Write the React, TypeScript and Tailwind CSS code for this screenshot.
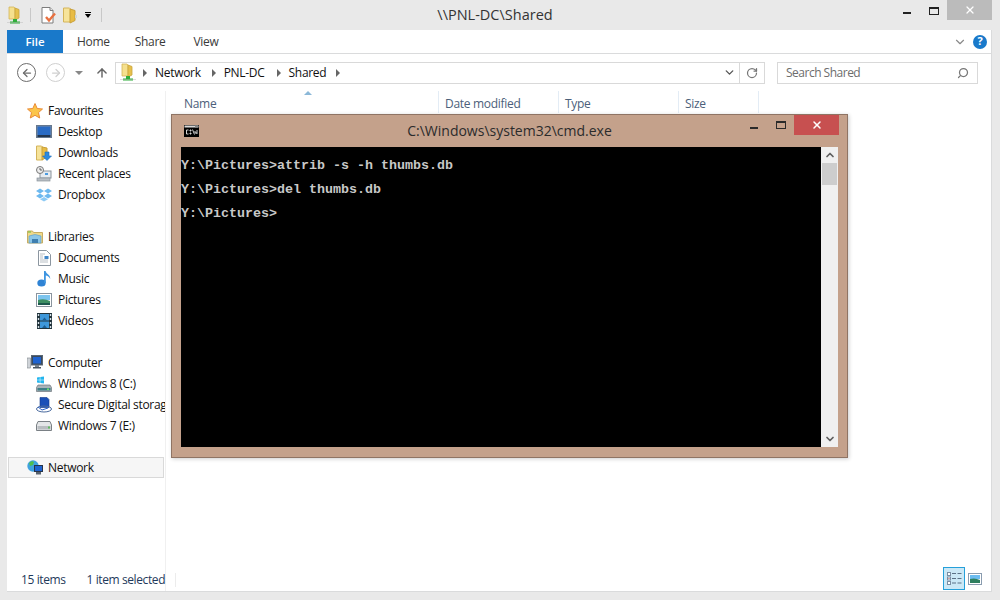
import React from 'react';
import { ChevronDown, RotateCw, Search, ArrowUp, ArrowLeft, ArrowRight, X, ChevronUp } from 'lucide-react';

const SEGOE = "font-['Open_Sans',sans-serif]";

// --- ICONS ---
const NetworkFolder = () => (
  <svg width="16" height="19" viewBox="0 0 16 19">
    <path d="M2 1h5l1 1v11H2z" fill="#f5e08e" stroke="#d3b558" strokeWidth="0.8" />
    <path d="M8 2l4 1.500V12l-4 2z" fill="#e6c04d" stroke="#c9a53c" strokeWidth="0.8" />
    <rect x="6" y="13" width="4" height="3" fill="#2fae3a" />
    <rect x="3" y="15.500" width="10" height="2" fill="#2fae3a" />
    <rect x="0" y="16" width="16" height="1" fill="#bdbdbd" opacity="0.5" />
  </svg>
);

const DocCheck = () => (
  <svg width="16" height="17" viewBox="0 0 16 17">
    <path d="M1 .5h8l3 3v12.500H1z" fill="#fff" stroke="#7d7d7d" />
    <path d="M9 .5v3h3" fill="#e8e8e8" stroke="#7d7d7d" />
    <path d="M5 10l3 3.500 6-7" fill="none" stroke="#e8703f" strokeWidth="2.4" />
  </svg>
);

const PlainFolder = () => (
  <svg width="14" height="17" viewBox="0 0 14 17">
    <path d="M.5 1h6l1 1v13h-7z" fill="#f6e39a" stroke="#d4b45a" />
    <path d="M7 2l5 1.500v10L7 16z" fill="#e8bc45" stroke="#c9a03a" />
    <rect x="12" y="8" width="2" height="3" fill="#cfd8dc" />
  </svg>
);

const Star = () => (
  <svg width="16" height="16" viewBox="0 0 16 16">
    <path d="M8 .5l2.200 5 5.300.5-4 3.600 1.200 5.400L8 12.300 3.300 15l1.200-5.400-4-3.600 5.300-.5z" fill="#fbc54a" stroke="#ea8a35" />
  </svg>
);

const Desktop = () => (
  <svg width="16" height="14" viewBox="0 0 16 14">
    <rect x=".5" y=".5" width="15" height="12" fill="#7d8ea3" stroke="#66788e" />
    <rect x="1.500" y="1.500" width="13" height="8.500" fill="#2a6bc4" />
    <rect x="1.500" y="10" width="13" height="2" fill="#23364f" />
  </svg>
);

const Downloads = () => (
  <svg width="16" height="16" viewBox="0 0 16 16">
    <path d="M.5 1h5l1 1v13h-6z" fill="#f6e39a" stroke="#d4b45a" />
    <path d="M6 2l5 1v9l-5 3z" fill="#e8bc45" stroke="#c9a03a" />
    <path d="M9 7h4v4h2.500L11 15.500 6.500 11H9z" fill="#2b8ae0" stroke="#1d6db8" strokeWidth="0.6" />
  </svg>
);

const Recent = () => (
  <svg width="16" height="16" viewBox="0 0 16 16">
    <rect x="4" y="5" width="11" height="7" fill="#e6ebf0" stroke="#8b949c" />
    <circle cx="4" cy="4" r="3.500" fill="#eee" stroke="#777" />
    <path d="M4 2v2h2" fill="none" stroke="#444" strokeWidth="0.8" />
    <rect x="9" y="7" width="3" height="2" fill="#4a9be0" />
    <rect x="1" y="12" width="13" height="3" fill="#b9bec4" stroke="#8b949c" strokeWidth="0.7" />
  </svg>
);

const Dropbox = () => (
  <svg width="16" height="14" viewBox="0 0 16 14">
    <path d="M4 .5L8 3 4 5.500 0 3zM12 .5L16 3l-4 2.500L8 3zM4 5.500L8 8l-4 2.500L0 8zM12 5.500L16 8l-4 2.500L8 8z" fill="#6db9ef" />
    <path d="M4 11.200l4-2.300 4 2.300L8 13.500z" fill="#8ecbf5" />
  </svg>
);

const Libraries = () => (
  <svg width="16" height="16" viewBox="0 0 16 16">
    <path d="M.5 2h5l1 1.500h9V14H.5z" fill="#efd98a" stroke="#c9ad62" />
    <rect x="1" y="2.500" width="3" height="1" fill="#6bbf3a" />
    <path d="M2 7q6-3 12 0v7H2z" fill="#8cc6e8" stroke="#5a9ac4" strokeWidth="0.6" />
    <rect x="5" y="10" width="6" height="4" fill="#3f7fb0" />
  </svg>
);

const Documents = () => (
  <svg width="13" height="16" viewBox="0 0 13 16">
    <path d="M.5.5h8l4 4v11H.5z" fill="#fff" stroke="#8c96a0" />
    <path d="M2 4h5M2 6h3M2 8h3M2 10h8M2 12h8" stroke="#a6aeb6" strokeWidth="0.8" />
    <rect x="6.500" y="6" width="4" height="3" fill="#3f86c8" />
  </svg>
);

const Music = () => (
  <svg width="14" height="17" viewBox="0 0 14 17">
    <ellipse cx="4.500" cy="13" rx="4.200" ry="3.600" fill="#2f83d4" />
    <path d="M7 1h1.600c.4 3 5 3.500 4.600 8-1-2.500-2.800-3.500-4.400-3.600V13H7z" fill="#3d94e0" />
  </svg>
);

const Pictures = () => (
  <svg width="16" height="14" viewBox="0 0 16 14">
    <rect x=".5" y=".5" width="15" height="13" fill="#fff" stroke="#8a949e" />
    <rect x="2" y="2" width="12" height="5" fill="#7cc4ee" />
    <path d="M2 7q6-2 12 1v4H2z" fill="#3f8f63" />
    <rect x="2" y="10" width="12" height="2" fill="#1f5a4e" />
  </svg>
);

const Videos = () => (
  <svg width="15" height="16" viewBox="0 0 15 16">
    <rect width="15" height="16" fill="#22343c" />
    <rect x="3" y="1" width="9" height="6.500" fill="#3f98da" />
    <rect x="3" y="8.500" width="9" height="6.500" fill="#3f98da" />
    <path d="M.8 1h1.400v2H.8zM.8 5h1.400v2H.8zM.8 9h1.400v2H.8zM.8 13h1.400v2H.8zM12.800 1h1.400v2h-1.400zM12.800 5h1.400v2h-1.400zM12.800 9h1.400v2h-1.400zM12.800 13h1.400v2h-1.400z" fill="#d7e2e8" />
    <path d="M5 7.500l2.500-3 2.500 3zM5 15l2.500-3 2.500 3z" fill="#1c5f94" />
  </svg>
);

const Computer = () => (
  <svg width="16" height="15" viewBox="0 0 16 15">
    <rect x="0" y="3" width="3.500" height="10" fill="#cfd3d8" stroke="#7c8288" strokeWidth="0.6" />
    <rect x="4.500" y=".5" width="11" height="9.500" fill="#3a4a5c" stroke="#5a6775" />
    <rect x="6" y="2" width="8" height="6.500" fill="#1f63d0" />
    <rect x="8" y="10" width="4" height="2" fill="#76818c" />
    <rect x="6" y="12" width="8" height="1.500" fill="#4a5662" />
  </svg>
);

const WinDrive = () => (
  <svg width="16" height="16" viewBox="0 0 16 16">
    <path d="M1 1.500l2.800-.4v2.700H1zM4.300 1l3.700-.5v3.300H4.300zM1 4.300h2.800V7L1 6.600zM4.300 4.300H8v3.200L4.300 7z" fill="#22b5ee" />
    <path d="M2 9h12l1.500 2.500v4H.5v-4z" fill="#a9b2b8" stroke="#6f777d" strokeWidth="0.7" />
    <rect x="1.500" y="12" width="13" height="2.500" fill="#3f7f86" />
    <rect x="11" y="12.500" width="2" height="1.500" fill="#6ee06a" />
  </svg>
);

const SdDrive = () => (
  <svg width="16" height="16" viewBox="0 0 16 16">
    <path d="M4 .5h7l2 2v8H4z" fill="#1a50b8" stroke="#123a8a" strokeWidth="0.6" />
    <ellipse cx="8" cy="12" rx="7.500" ry="3" fill="none" stroke="#4a6a9e" />
    <path d="M2 10l4 3 6-2" fill="none" stroke="#2a62c8" />
  </svg>
);

const PlainDrive = () => (
  <svg width="16" height="10" viewBox="0 0 16 10">
    <path d="M2 .5h12L15.500 4v5.500H.5V4z" fill="#e4e6e8" stroke="#7a8085" />
    <rect x="1.500" y="5" width="13" height="3.500" fill="#b9bdc1" />
    <rect x="12" y="5.500" width="2" height="2" fill="#5fbd5f" />
  </svg>
);

const NetworkGlobe = () => (
  <svg width="16" height="15" viewBox="0 0 16 15">
    <circle cx="6" cy="6" r="5.700" fill="#3fa2e0" />
    <path d="M2 3l3-2 2 1-1 3-3 1zM7 8l3-1 .5 2-2 2z" fill="#4fbf4f" />
    <rect x="7" y="5" width="9" height="7" fill="#26344a" />
    <rect x="8" y="6" width="7" height="5" fill="#1f63d0" />
    <rect x="9" y="12" width="5" height="2.500" fill="#59636e" />
  </svg>
);

const CmdIcon = () => (
  <svg width="15" height="12" viewBox="0 0 15 12">
    <rect width="15" height="12" fill="#000" />
    <rect x="0.5" y="0.5" width="14" height="2" fill="#d8d8d8" />
    <rect x="11" y="0.5" width="3" height="2" fill="#888" />
    <path d="M4.500 5h-2v4h2M6 5h1v1H6zM6 8h1v1H6zM8.500 4.500l2 5M11 6v2h2M13 5v4" fill="none" stroke="#e8e8e8" strokeWidth="0.9" />
  </svg>
);

const DetailsView = () => (
  <svg width="15" height="13" viewBox="0 0 15 13">
    <rect x=".5" y=".5" width="3" height="3" fill="#fff" stroke="#7b8ea3" />
    <rect x=".5" y="5" width="3" height="3" fill="#fff" stroke="#7b8ea3" />
    <rect x="1.500" y="6" width="1" height="1" fill="#b04040" />
    <rect x=".5" y="9.500" width="3" height="3" fill="#fff" stroke="#7b8ea3" />
    <path d="M5 1.500h4M10.500 1.500h4M5 6.500h4M10.500 6.500h4M5 11h4M10.500 11h4" stroke="#5a7186" />
  </svg>
);

const ThumbView = () => (
  <svg width="14" height="12" viewBox="0 0 14 12">
    <rect x=".5" y=".5" width="13" height="11" fill="#fff" stroke="#8a9caf" />
    <rect x="2" y="2" width="10" height="4" fill="#6cbcf0" />
    <path d="M2 6q5-1.500 10 1v3H2z" fill="#2f7f5f" />
  </svg>
);

// --- DATA ---
const navGroups = [
  {
    head: { label: 'Favourites', icon: <Star /> },
    items: [
      { label: 'Desktop', icon: <Desktop /> },
      { label: 'Downloads', icon: <Downloads /> },
      { label: 'Recent places', icon: <Recent /> },
      { label: 'Dropbox', icon: <Dropbox /> },
    ],
  },
  {
    head: { label: 'Libraries', icon: <Libraries /> },
    items: [
      { label: 'Documents', icon: <Documents /> },
      { label: 'Music', icon: <Music /> },
      { label: 'Pictures', icon: <Pictures /> },
      { label: 'Videos', icon: <Videos /> },
    ],
  },
  {
    head: { label: 'Computer', icon: <Computer /> },
    items: [
      { label: 'Windows 8 (C:)', icon: <WinDrive /> },
      { label: 'Secure Digital storage', icon: <SdDrive /> },
      { label: 'Windows 7 (E:)', icon: <PlainDrive /> },
    ],
  },
];

const columns = [
  { label: 'Name', width: 'w-[261px]' },
  { label: 'Date modified', width: 'w-[120px]' },
  { label: 'Type', width: 'w-[120px]' },
  { label: 'Size', width: 'w-[80px]' },
];

const CrumbArrow = () => <span className="block w-0 h-0 border-y-[4px] border-y-transparent border-l-[4px] border-l-[#666]" />;

const Sep = () => <span className="block w-px h-[14px] bg-[#c8c8c8]" />;

export default function App() {
  return (
    <div className={`${SEGOE} relative w-[1000px] h-[600px] overflow-hidden bg-[#e9e9e9] text-[12px] tracking-[-0.3px] text-[#111] flex flex-col`}>
      {/* Title bar */}
      <div className="h-[30px] relative flex items-center pl-[7px]">
        <NetworkFolder />
        <span className="ml-[7px]"><Sep /></span>
        <span className="ml-[10px]"><DocCheck /></span>
        <span className="ml-[6px]"><PlainFolder /></span>
        <span className="ml-[8px] flex flex-col items-center gap-[1px]">
          <span className="w-[6px] h-px bg-black" />
          <span className="w-0 h-0 border-x-[3.5px] border-x-transparent border-t-[4px] border-t-black" />
        </span>
        <span className="ml-[10px]"><Sep /></span>
        <div className="absolute left-[395px] w-[200px] top-[5px] text-center text-[14.5px] leading-[20px] tracking-normal text-[#333]">\\PNL-DC\Shared</div>
        <div className="ml-auto flex items-start self-start mr-[8px]">
          <span className="w-[8px] h-[2px] bg-[#222] mt-[12px] mr-[18px]" />
          <span className="w-[10px] h-[8px] border border-[#222] border-t-2 mt-[7px] mr-[8px]" />
          <span className="w-[45px] h-[20px] bg-[#bbbbbb] flex items-center justify-center text-white">
            <X size={12} strokeWidth={2.5} />
          </span>
        </div>
      </div>

      {/* Main panel */}
      <div className="ml-[7px] mr-[8px] h-[562px] bg-white border border-t-0 border-[#dadbdc] border-l-0 flex flex-col">
        {/* Ribbon tabs */}
        <div className="h-[24px] flex items-stretch border-b border-[#dadbdc] text-[#3a3a3a]">
          <div className="w-[56px] bg-[#1979ca] text-white flex items-center justify-center font-semibold text-[11.5px] tracking-normal">File</div>
          <span className="ml-[14px] flex items-center">Home</span>
          <span className="ml-[25px] flex items-center">Share</span>
          <span className="ml-[28px] flex items-center">View</span>
          <div className="ml-auto flex items-center mr-[4px] gap-[6px]">
            <ChevronDown size={14} className="text-[#8a8a8a]" strokeWidth={2} />
            <span className="w-[14px] h-[14px] rounded-full bg-[#1979ca] text-white text-[11px] font-bold flex items-center justify-center">?</span>
          </div>
        </div>

        {/* Address row */}
        <div className="h-[37px] flex items-center pl-[10px] pr-[13px]">
          <span className="w-[19px] h-[19px] rounded-full border border-[#6d6d6d] flex items-center justify-center text-[#6d6d6d]">
            <ArrowLeft size={12} strokeWidth={2.5} />
          </span>
          <span className="ml-[10px] w-[19px] h-[19px] rounded-full border border-[#d0d0d0] flex items-center justify-center text-[#d0d0d0]">
            <ArrowRight size={12} strokeWidth={2.5} />
          </span>
          <span className="ml-[10px] w-0 h-0 border-x-[4px] border-x-transparent border-t-[4px] border-t-[#888]" />
          <ArrowUp size={14} strokeWidth={2.5} className="ml-[12px] text-[#666]" />
          <div className="ml-[6px] w-[650px] h-[22px] border border-[#d9d9d9] flex items-center">
            <span className="ml-[4px]"><NetworkFolder /></span>
            <span className="ml-[7px]"><CrumbArrow /></span>
            <span className="ml-[8px]">Network</span>
            <span className="ml-[11px]"><CrumbArrow /></span>
            <span className="ml-[8px]">PNL-DC</span>
            <span className="ml-[12px]"><CrumbArrow /></span>
            <span className="ml-[8px]">Shared</span>
            <span className="ml-[10px]"><CrumbArrow /></span>
            <ChevronDown size={13} strokeWidth={2.5} className="ml-auto mr-[3px] text-[#555]" />
            <span className="w-[25px] h-full border-l border-[#d9d9d9] flex items-center justify-center text-[#777]">
              <RotateCw size={12} strokeWidth={2.5} />
            </span>
          </div>
          <div className="ml-[12px] w-[201px] h-[22px] border border-[#d9d9d9] flex items-center pl-[8px] pr-[8px] text-[#6d6d6d] tracking-[-0.5px]">
            <span>Search Shared</span>
            <Search size={12} strokeWidth={2.5} className="ml-auto -scale-x-100 text-[#777]" />
          </div>
        </div>

        {/* Content */}
        <div className="flex-1 flex min-h-0">
          <div className="w-[159px] border-r border-[#f0f0f0] flex flex-col relative">
            <div className="pt-[9px] flex flex-col">
              {navGroups.map(group => (
                <div key={group.head.label} className="mb-[21px]">
                  <div className="h-[21px] flex items-center pl-[12px] whitespace-nowrap overflow-hidden">
                    <span className="w-[16px] flex justify-center mr-[5px] ml-[8px]">{group.head.icon}</span>
                    {group.head.label}
                  </div>
                  {group.items.map(item => (
                    <div key={item.label} className="h-[21px] flex items-center pl-[29px] whitespace-nowrap overflow-hidden">
                      <span className="w-[16px] flex justify-center mr-[6px] shrink-0">{item.icon}</span>
                      {item.label}
                    </div>
                  ))}
                </div>
              ))}
              <div className="ml-px mr-px h-[21px] bg-[#f6f6f6] border border-[#d9d9d9] flex items-center pl-[10px]">
                <span className="w-[16px] flex justify-center mr-[5px] ml-[8px]"><NetworkGlobe /></span>
                Network
              </div>
            </div>
            <div className="mt-auto h-[22px] flex items-center pl-[14px] whitespace-nowrap text-[#1e395b] tracking-[-0.4px]">
              <span>15 items</span>
              <span className="w-px h-[14px] bg-[#ececec] ml-[11px] mr-[10px]" />
              <span>1 item selected</span>
              <span className="w-px h-[14px] bg-[#ececec] ml-[10px] shrink-0" />
            </div>
          </div>

          <div className="flex-1 flex flex-col relative">
            <div className="h-[22px] flex pl-[12px] text-[#4c607a]">
              {columns.map(col => (
                <div key={col.label} className={`${col.width} pl-[6px] border-r border-[#e3ecf5] flex items-end`}>
                  {col.label}
                </div>
              ))}
            </div>
            <span className="absolute left-[138px] top-0 w-0 h-0 border-x-[4px] border-x-transparent border-b-[4px] border-b-[#8bb8d8]" />
            <div className="mt-auto self-end mr-[9px] mb-[1px] flex items-center gap-[3px]">
              <span className="w-[22px] h-[23px] border border-[#26a0da] bg-[#cbe8f6] flex items-center justify-center">
                <DetailsView />
              </span>
              <ThumbView />
            </div>
          </div>
        </div>
      </div>

      {/* Console window floating over the explorer */}
      <div className="absolute left-[171px] top-[114px] w-[677px] h-[344px] bg-[#c4a18b] border border-[#8f7464] shadow-[1px_1px_4px_rgba(0,0,0,0.2)] flex flex-col tracking-normal">
        <div className="h-[32px] flex relative">
          <span className="ml-[12px] mt-[10px]"><CmdIcon /></span>
          <div className="absolute left-0 right-0 top-[6px] text-center text-[14px] leading-[20px] text-[#2b2b2b]">C:\Windows\system32\cmd.exe</div>
          <div className="ml-auto flex items-start mr-[8px]">
            <span className="w-[8px] h-[2px] bg-[#2a2a2a] mt-[12px] mr-[18px]" />
            <span className="w-[10px] h-[8px] border border-[#2a2a2a] border-t-2 mt-[6px] mr-[8px]" />
            <span className="w-[45px] h-[20px] bg-[#c75050] flex items-center justify-center text-white">
              <X size={12} strokeWidth={3} />
            </span>
          </div>
        </div>
        <div className="mx-[9px] h-[300px] flex">
          <div className="flex-1 bg-black text-[#c8c8c8] font-['Liberation_Mono',monospace] font-bold text-[13.33px] leading-[24px] pt-[7px] whitespace-pre">
            <div>{'Y:\\Pictures>attrib -s -h thumbs.db'}</div>
            <div>{'Y:\\Pictures>del thumbs.db'}</div>
            <div>{'Y:\\Pictures>'}</div>
          </div>
          <div className="w-[17px] bg-[#f0f0f0] flex flex-col items-center text-[#606060]">
            <ChevronUp size={12} strokeWidth={3.5} className="my-[2px]" />
            <span className="w-[15px] h-[22px] bg-[#cdcdcd]" />
            <ChevronDown size={12} strokeWidth={3.5} className="mt-auto mb-[2px]" />
          </div>
        </div>
      </div>
    </div>
  );
}
